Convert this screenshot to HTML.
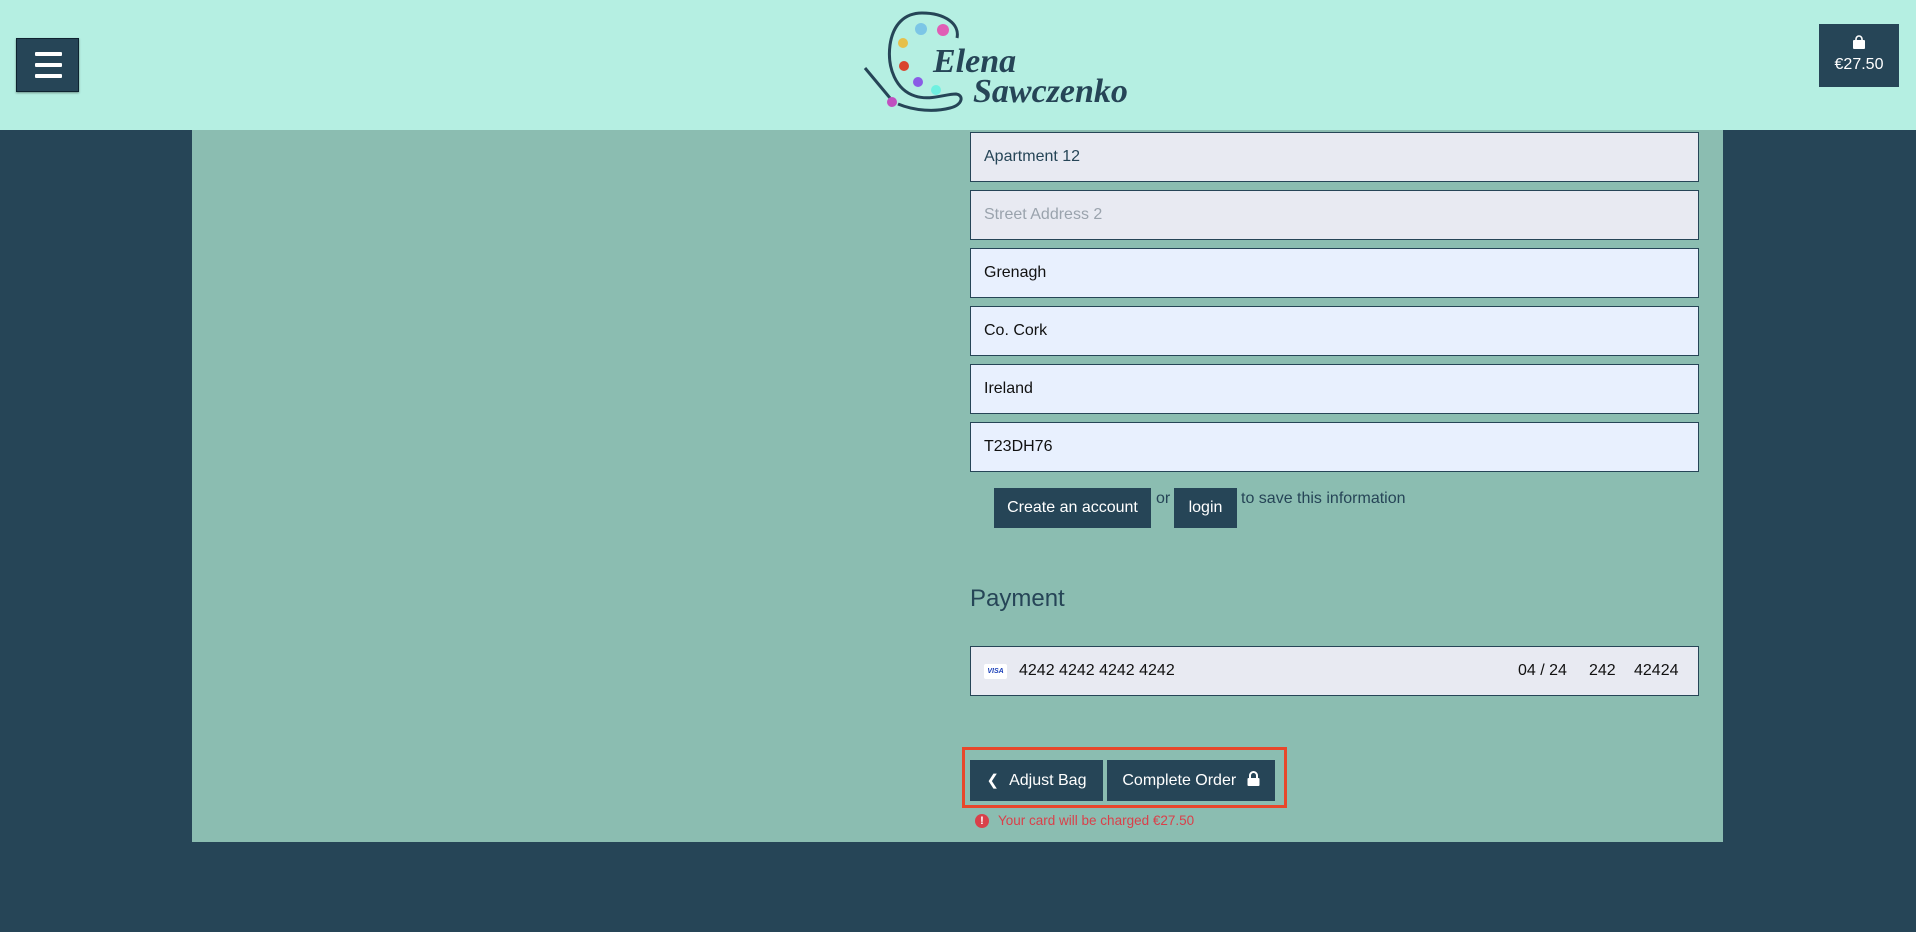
<!DOCTYPE html>
<html><head><meta charset="utf-8"><style>
*{box-sizing:border-box;margin:0;padding:0}
body{width:1916px;height:932px;background:#264557;font-family:"Liberation Sans",sans-serif;position:relative;overflow:hidden}
.hdr{position:absolute;left:0;top:0;width:1916px;height:130px;background:#b5efe2}
.panel{position:absolute;left:192px;top:130px;width:1531px;height:712px;background:#8bbdb1}
.burger{position:absolute;left:16px;top:38px;width:63px;height:54px;background:#264557;border:1px solid #0e2330;box-shadow:0 1px 2px rgba(0,0,0,.4)}
.burger i{position:absolute;left:18px;width:27px;height:4px;background:#fff;border-radius:1px}
.cart{position:absolute;left:1819px;top:24px;width:80px;height:63px;background:#264557;color:#fff;font-size:16px;text-align:center}
.inp{position:absolute;left:970px;width:729px;height:50px;border:1px solid #264557;font-size:16px;padding-left:13px;line-height:48px;color:#111}
.g{background:#e8eaf2}.b{background:#e8f0fe}
.btn{position:absolute;background:#264557;color:#fff;font-size:16px;text-align:center}
.t{position:absolute;color:#264557;font-size:16px}
</style></head><body>
<div class="hdr">
<div class="burger"><i style="top:13px"></i><i style="top:24px"></i><i style="top:35px"></i></div>
<svg style="position:absolute;left:860px;top:10px" width="280" height="112" viewBox="0 0 280 112">
<path d="M97 28 C100 14 85 3 62 3 C45 3 33 14 30 35 C27 58 36 80 55 86 C70 91 85 84 96 84 C104 85 103 95 90 98 C75 102 55 101 38 94" fill="none" stroke="#264557" stroke-width="3"/>
<line x1="5" y1="58" x2="30" y2="88" stroke="#264557" stroke-width="3"/>
<circle cx="32" cy="92" r="5" fill="#c050c0"/>
<circle cx="61" cy="19" r="6" fill="#7cc6e6"/><circle cx="83" cy="20" r="6" fill="#e05db5"/>
<circle cx="43" cy="33" r="5" fill="#e6c04a"/><circle cx="44" cy="56" r="5" fill="#d9442e"/>
<circle cx="58" cy="72" r="5" fill="#8a5ce6"/><circle cx="76" cy="80" r="5" fill="#6ff0e0"/>
<text x="73" y="62" font-family="Liberation Serif,serif" font-style="italic" font-weight="bold" font-size="34" fill="#264557">Elena</text>
<text x="113" y="92" font-family="Liberation Serif,serif" font-style="italic" font-weight="bold" font-size="34" fill="#264557">Sawczenko</text>
</svg>
<div class="cart"><svg style="margin-top:11px" width="14" height="14" viewBox="0 0 14 14"><path d="M4 5V4a3 3 0 0 1 6 0v1" fill="none" stroke="#fff" stroke-width="1.6"/><rect x="1" y="5" width="12" height="9" rx="1" fill="#fff"/></svg><div style="margin-top:2px">€27.50</div></div>
</div>
<div class="panel"></div>
<div class="inp g" style="top:132px;color:#264557">Apartment 12</div>
<div class="inp g" style="top:190px;color:#9aa3ad">Street Address 2</div>
<div class="inp b" style="top:248px">Grenagh</div>
<div class="inp b" style="top:306px">Co. Cork</div>
<div class="inp b" style="top:364px">Ireland</div>
<div class="inp b" style="top:422px">T23DH76</div>
<div class="btn" style="left:994px;top:488px;width:157px;height:40px;line-height:40px">Create an account</div>
<div class="t" style="left:1156px;top:490px">or</div>
<div class="btn" style="left:1174px;top:488px;width:63px;height:40px;line-height:40px">login</div>
<div class="t" style="left:1241px;top:490px">to save this information</div>
<div class="t" style="left:970px;top:585px;font-size:24px">Payment</div>
<div class="inp g" style="top:646px;height:50px;padding-left:48px">4242 4242 4242 4242
<span style="position:absolute;left:13px;top:17px;width:23px;height:15px;background:#fff;border-radius:2px;font-size:7px;line-height:15px;text-align:center;color:#1a3fb8;font-weight:bold;font-style:italic">VISA</span>
<span style="position:absolute;left:547px">04 / 24</span><span style="position:absolute;left:618px">242</span><span style="position:absolute;left:663px">42424</span></div>
<div style="position:absolute;left:962px;top:747px;width:325px;height:61px;border:3px solid #e8472b"></div>
<div class="btn" style="left:970px;top:760px;width:133px;height:41px;line-height:41px"><span style="font-size:15px;margin-right:10px">&#10094;</span>Adjust Bag</div>
<div class="btn" style="left:1107px;top:760px;width:168px;height:41px;line-height:41px">Complete Order <svg width="13" height="15" viewBox="0 0 13 15" style="margin-left:6px;vertical-align:-1px"><path d="M3 7V4.5a3.5 3.5 0 0 1 7 0V7" fill="none" stroke="#fff" stroke-width="2"/><rect x="0.5" y="7" width="12" height="8" rx="1" fill="#fff"/></svg></div>
<div style="position:absolute;left:975px;top:814px;width:14px;height:14px;border-radius:50%;background:#d9404a;color:#fff;font-size:11px;font-weight:bold;text-align:center;line-height:14px">!</div>
<div style="position:absolute;left:998px;top:813px;color:#d9404a;font-size:13.5px">Your card will be charged €27.50</div>
</body></html>
